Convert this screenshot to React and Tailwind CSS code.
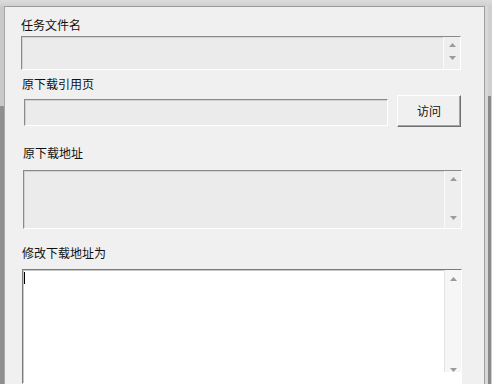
import React from "react";

const font = { fontFamily: '"Noto Sans CJK SC", "Noto Sans", sans-serif' };

function Arrow({ up }) {
  return (
    <svg width="7" height="4" viewBox="0 0 7 4" className="block">
      {up ? (
        <polygon points="3.5,0 7,4 0,4" fill="#9a9a9a" />
      ) : (
        <polygon points="0,0 7,0 3.5,4" fill="#9a9a9a" />
      )}
    </svg>
  );
}

function ScrollCol({ track, upPad, downPad }) {
  return (
    <div
      className={`w-[17px] h-full flex flex-col justify-between border-l border-[#fafafa] ${track}`}
    >
      <div className={`flex justify-center ${upPad}`}>
        <Arrow up />
      </div>
      <div className={`flex justify-center ${downPad}`}>
        <Arrow />
      </div>
    </div>
  );
}

function Label({ children, className }) {
  return (
    <div className={`text-[12px] leading-[14px] text-[#111] ${className}`} style={font}>
      {children}
    </div>
  );
}

export default function App() {
  return (
    <div className="w-[492px] h-[384px] overflow-hidden bg-[#d5d5d5] flex flex-col">
      <div className="h-[6px] bg-gradient-to-b from-[#dcdcdc] to-[#cfcfcf] shrink-0" />
      <div className="flex flex-1 min-h-0">
        <div className="w-[4px] flex flex-col shrink-0">
          <div className="h-[100px] bg-[#c9c9c9]" />
          <div className="flex-1 bg-[#8f8f8f]" />
        </div>
        <div className="flex-1 bg-[#f0f0f0] border-t border-l border-r border-t-[#9c9c9c] border-l-[#a8a8a8] border-r-[#a0a0a0] flex flex-col pt-[11px]">
          {/* Label 1 */}
          <Label className="ml-[16px]">任务文件名</Label>
          <div className="ml-[16px] mt-[4px] w-[440px] h-[35px] bg-[#ebebeb] border border-t-[#8a8a8a] border-l-[#8a8a8a] border-b-white border-r-white shadow-[inset_1px_1px_0_#d2d2d2] flex justify-end">
            <ScrollCol track="bg-[#eeeeee]" upPad="pt-[6px]" downPad="pb-[9px]" />
          </div>

          {/* Label 2 */}
          <Label className="ml-[17px] mt-[7px]">原下载引用页</Label>
          <div className="mt-[4px] flex items-start">
            <div className="ml-[19px] mt-[4px] w-[364px] h-[27px] bg-[#ebebeb] border border-t-[#8a8a8a] border-l-[#8a8a8a] border-b-white border-r-white shadow-[inset_1px_1px_0_#d2d2d2]" />
            <div
              className="ml-[9px] w-[64px] h-[32px] bg-[#f0f0f0] border border-t-white border-l-white border-b-[#6f6f6f] border-r-[#6f6f6f] shadow-[inset_-1px_-1px_0_#a5a5a5] flex items-center justify-center text-[12px] text-[#111]"
              style={font}
            >
              访问
            </div>
          </div>

          {/* Label 3 */}
          <Label className="ml-[18px] mt-[19px]">原下载地址</Label>
          <div className="ml-[18px] mt-[10px] w-[439px] h-[61px] bg-[#ebebeb] border border-t-[#8a8a8a] border-l-[#8a8a8a] border-b-white border-r-white shadow-[inset_1px_1px_0_#d2d2d2] flex justify-end">
            <ScrollCol track="bg-[#eeeeee]" upPad="pt-[6px]" downPad="pb-[8px]" />
          </div>

          {/* Label 4 */}
          <Label className="ml-[17px] mt-[17px]">修改下载地址为</Label>
          <div className="ml-[17px] mt-[9px] w-[440px] h-[120px] bg-white border border-t-[#7a7a7a] border-l-[#7a7a7a] border-b-white border-r-white shadow-[inset_1px_1px_0_#c8c8c8] flex">
            <div className="flex-1 pl-[1px] pt-[2px]">
              <div className="w-[1px] h-[12px] bg-black" />
            </div>
            <div className="w-[17px] h-[102px] flex flex-col justify-between border-l border-[#e4e4e4] bg-[#f6f6f6]">
              <div className="flex justify-center pt-[7px]">
                <Arrow up />
              </div>
              <div className="flex justify-center pb-[0px]">
                <Arrow />
              </div>
            </div>
          </div>
        </div>
        <div className="w-[7px] flex shrink-0">
          <div className="w-[3px] bg-[#d8d8d8]" />
          <div className="w-[3px] flex flex-col">
            <div className="h-[90px] bg-[#cfcfcf]" />
            <div className="flex-1 bg-[#8a8a8a]" />
          </div>
          <div className="w-[1px] bg-[#d0d0d0]" />
        </div>
      </div>
    </div>
  );
}
